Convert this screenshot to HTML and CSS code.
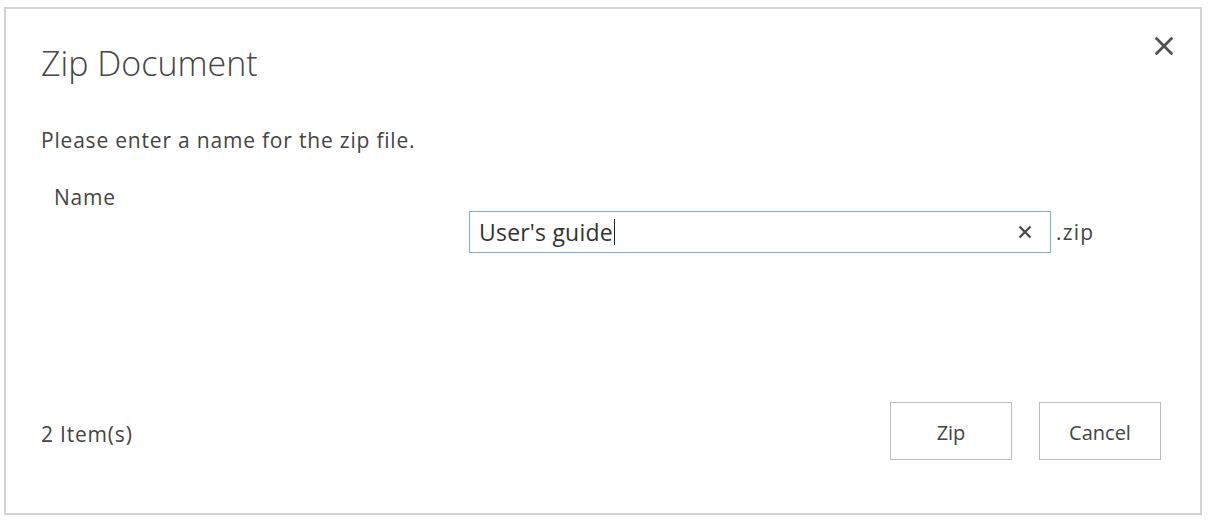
FILE: index.html
```html
<!DOCTYPE html>
<html>
<head>
<meta charset="utf-8">
<link rel="stylesheet" href="styles.css">
</head>
<body>
<div class="dialog">
  <div class="header">
    <h1 class="title">Zip Document</h1>
    <button class="close" aria-label="Close">
      <svg width="20" height="20" viewBox="0 0 20 20"><path d="M2.5 2.5 L17.5 17.5 M17.5 2.5 L2.5 17.5" stroke="#505050" stroke-width="2.8" stroke-linecap="round"/></svg>
    </button>
  </div>
  <p class="message">Please enter a name for the zip file.</p>
  <div class="form">
    <div class="label">Name</div>
    <div class="field-row">
      <div class="input">
        <span class="value">User's guide</span><span class="caret"></span>
        <span class="clear">
          <svg width="14" height="14" viewBox="0 0 14 14"><path d="M1.5 1.5 L12.5 12.5 M12.5 1.5 L1.5 12.5" stroke="#4a4a4a" stroke-width="2.4"/></svg>
        </span>
      </div>
      <span class="ext">.zip</span>
    </div>
  </div>
  <div class="footer">
    <span class="count">2 Item(s)</span>
    <div class="buttons">
      <button class="btn">Zip</button>
      <button class="btn">Cancel</button>
    </div>
  </div>
</div>
</body>
</html>
```

FILE: styles.css
```css
html, body {
  margin: 0;
  background: #fff;
}
body {
  font-family: "Open Sans", "Segoe UI", sans-serif;
  color: #444;
}
.dialog {
  box-sizing: border-box;
  width: 1198px;
  height: 508px;
  margin: 7px 0 0 4px;
  border: 2px solid #d2d2d2;
  display: flex;
  flex-direction: column;
  padding: 0 25px 0 35px;
}
.header {
  display: flex;
  justify-content: space-between;
  align-items: flex-start;
  margin-top: 32px;
}
.title {
  margin: 0;
  font-weight: 300;
  font-size: 34px;
  line-height: 44px;
  color: #444;
}
.close {
  border: 0;
  background: none;
  padding: 0;
  margin: -6px 0 0 0;
  width: 22px;
  height: 22px;
  display: flex;
  align-items: center;
  justify-content: center;
}
.message {
  margin: 41px 0 0 0;
  font-size: 21px;
  line-height: 28px;
  letter-spacing: 0.8px;
}
.form {
  display: flex;
  flex-direction: column;
  margin-top: 30px;
}
.label {
  padding-left: 13px;
  font-size: 21px;
  line-height: 27px;
  letter-spacing: 0.8px;
}
.field-row {
  display: flex;
  align-items: center;
  margin-left: 428px;
}
.input {
  box-sizing: border-box;
  width: 582px;
  height: 42px;
  border: 1px solid #79b3dd;
  display: flex;
  align-items: center;
  padding: 0 18px 0 9px;
}
.value {
  font-size: 23px;
  letter-spacing: 0.2px;
  color: #333;
}
.caret {
  width: 1px;
  height: 26px;
  background: #222;
  margin-left: 1px;
}
.clear {
  margin-left: auto;
  display: flex;
}
.ext {
  margin-left: 5px;
  font-size: 21px;
  letter-spacing: 1.2px;
  color: #444;
}
.footer {
  margin-top: auto;
  margin-bottom: 53px;
  padding-right: 14px;
  display: flex;
  justify-content: space-between;
  align-items: center;
}
.count {
  font-size: 21px;
  letter-spacing: 0.8px;
  padding-top: 5px;
}
.buttons {
  display: flex;
  gap: 27px;
}
.btn {
  box-sizing: border-box;
  width: 122px;
  height: 58px;
  border: 1px solid #bdbdbd;
  background: #fff;
  font-family: "Open Sans", sans-serif;
  font-size: 20px;
  padding: 2px 0 0 0;
  color: #444;
}
```
